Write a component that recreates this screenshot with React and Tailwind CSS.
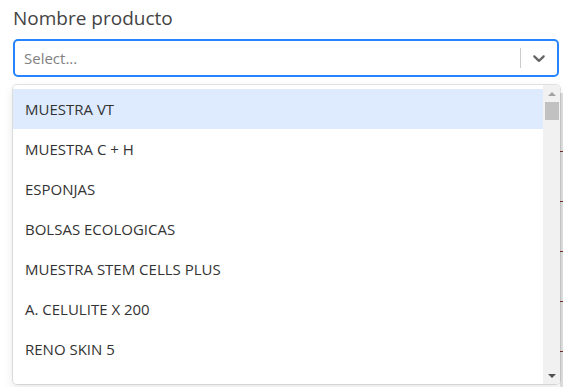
import React from "react";

const options = [
  "MUESTRA VT",
  "MUESTRA C + H",
  "ESPONJAS",
  "BOLSAS ECOLOGICAS",
  "MUESTRA STEM CELLS PLUS",
  "A. CELULITE X 200",
  "RENO SKIN 5",
  "REPAR SKIN",
];

function Chevron() {
  return (
    <svg viewBox="0 0 20 20" width="20" height="20" className="fill-[#666666]">
      <path d="M4.516 7.548c0.436-0.446 1.043-0.481 1.576 0l3.908 3.747 3.908-3.747c0.533-0.481 1.141-0.446 1.574 0 0.436 0.445 0.408 1.197 0 1.615-0.406 0.418-4.695 4.502-4.695 4.502-0.217 0.223-0.502 0.335-0.787 0.335s-0.57-0.112-0.789-0.335c0 0-4.287-4.084-4.695-4.502s-0.436-1.17 0-1.615z" />
    </svg>
  );
}

export default function App() {
  return (
    <div
      className="relative h-[387px] w-[563px] overflow-hidden bg-white"
      style={{ fontFamily: '"Open Sans", "Noto Sans", sans-serif' }}
    >
      {/* page content peeking out behind the menu */}
      <div className="absolute right-0 top-[93px] flex h-[294px] w-[3px] flex-col bg-[#e2e2e2]">
        {[58, 108, 158, 208, 258].map((t) => (
          <div key={t} className="absolute left-0 h-px w-[3px] bg-[#7a2e2e]" style={{ top: t }} />
        ))}
      </div>

      <div className="px-[13px] pt-[4px]">
        <label className="block text-[19px] leading-[28px] text-[#444444]">Nombre producto</label>
        <div className="mt-[7px] flex h-[38px] w-[546px] items-center rounded-[5px] border-2 border-[#2684ff] bg-white">
          <div className="flex-1 pl-[9px] text-[15px] text-[#808080]">Select...</div>
          <span className="h-[20px] w-px bg-[#cccccc]" />
          <div className="flex w-[36px] items-center justify-center">
            <Chevron />
          </div>
        </div>
      </div>

      {/* dropdown menu */}
      <div className="absolute left-[13px] top-[85px] flex h-[299px] w-[547px] overflow-hidden rounded-[4px] bg-white shadow-[0_0_0_1px_rgba(0,0,0,0.1),0_4px_11px_rgba(0,0,0,0.1)]">
        <div className="flex-1 pt-[4px]">
          {options.map((o, i) => (
            <div
              key={o}
              className={`flex h-[40px] items-center px-[12px] text-[15px] text-[#333333] ${
                i === 0 ? "bg-[#deebff]" : ""
              }`}
            >
              {o}
            </div>
          ))}
        </div>
        <div className="flex w-[17px] flex-col items-center bg-[#f1f1f1]">
          <div className="flex h-[17px] w-full items-center justify-center">
            <span className="h-0 w-0 border-x-[4px] border-b-[4px] border-x-transparent border-b-[#a3a3a3]" />
          </div>
          <div className="h-[18px] w-[14px] bg-[#c1c1c1]" />
          <div className="flex-1" />
          <div className="flex h-[17px] w-full items-center justify-center">
            <span className="h-0 w-0 border-x-[4px] border-t-[4px] border-x-transparent border-t-[#505050]" />
          </div>
        </div>
      </div>
    </div>
  );
}
